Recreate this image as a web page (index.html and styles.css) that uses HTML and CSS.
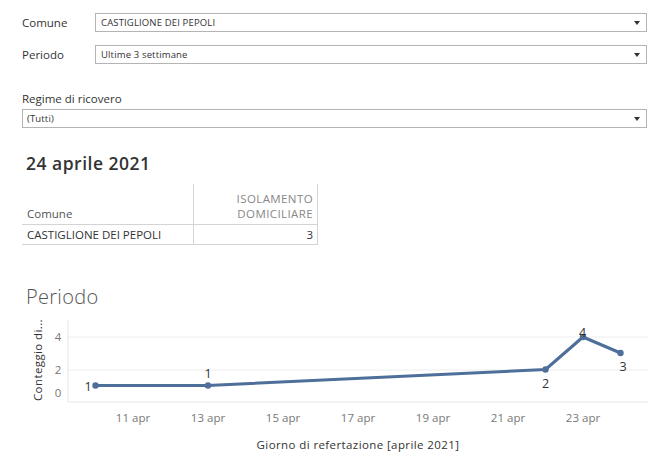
FILE: index.html
```html
<!DOCTYPE html>
<html lang="it">
<head>
    <meta charset="UTF-8">
    <title>Isolamento domiciliare - Comune</title>
    <link rel="stylesheet" href="styles.css">
</head>
<body>
    <div class="filters">
        <div class="filter-row">
            <span class="filter-label">Comune</span>
            <div class="select"><span>CASTIGLIONE DEI PEPOLI</span><i class="arrow"></i></div>
        </div>
        <div class="filter-row">
            <span class="filter-label">Periodo</span>
            <div class="select"><span>Ultime 3 settimane</span><i class="arrow"></i></div>
        </div>
        <div class="filter-block">
            <div class="block-label">Regime di ricovero</div>
            <div class="select wide"><span>(Tutti)</span><i class="arrow"></i></div>
        </div>
    </div>

    <h2 class="day-title">24 aprile 2021</h2>

    <table class="summary">
        <tr class="head">
            <th class="col-name">Comune</th>
            <th class="col-val">ISOLAMENTO<br>DOMICILIARE</th>
        </tr>
        <tr>
            <td class="col-name">CASTIGLIONE DEI PEPOLI</td>
            <td class="col-val">3</td>
        </tr>
    </table>

    <div class="chart">
        <div class="chart-title">Periodo</div>
        <svg class="chart-svg" width="657" height="141">
            <g transform="translate(0,-315)">
                <!-- grid -->
                <line x1="68" y1="320" x2="68" y2="402" class="axis"/>
                <line x1="68" y1="337" x2="648" y2="337" class="grid"/>
                <line x1="68" y1="370" x2="648" y2="370" class="grid"/>
                <line x1="68" y1="402" x2="648" y2="402" class="axis"/>

                <text class="ytitle" transform="translate(42,360) rotate(-90)" text-anchor="middle">Conteggio di...</text>
                <text class="tick" x="58" y="341" text-anchor="middle">4</text>
                <text class="tick" x="58" y="374" text-anchor="middle">2</text>
                <text class="tick" x="58" y="397" text-anchor="middle">0</text>

                <text class="tick" x="133" y="422" text-anchor="middle">11 apr</text>
                <text class="tick" x="208" y="422" text-anchor="middle">13 apr</text>
                <text class="tick" x="283" y="422" text-anchor="middle">15 apr</text>
                <text class="tick" x="358" y="422" text-anchor="middle">17 apr</text>
                <text class="tick" x="433" y="422" text-anchor="middle">19 apr</text>
                <text class="tick" x="508" y="422" text-anchor="middle">21 apr</text>
                <text class="tick" x="583" y="422" text-anchor="middle">23 apr</text>

                <text class="xtitle" x="358" y="449" text-anchor="middle">Giorno di refertazione [aprile 2021]</text>

                <polyline class="series" points="95.5,385.5 208,385.5 545.5,369.5 583,337 620.5,353"/>
                <circle cx="95.5" cy="385.5" r="3.2" class="dot"/>
                <circle cx="208" cy="385.5" r="3.2" class="dot"/>
                <circle cx="545.5" cy="369.5" r="3.2" class="dot"/>
                <circle cx="583" cy="337" r="3.2" class="dot"/>
                <circle cx="620.5" cy="353" r="3.2" class="dot"/>

                <text class="val" x="88" y="391" text-anchor="middle">1</text>
                <text class="val" x="208" y="378" text-anchor="middle">1</text>
                <text class="val" x="545.5" y="388" text-anchor="middle">2</text>
                <text class="val" x="582.5" y="337" text-anchor="middle">4</text>
                <text class="val" x="623" y="371" text-anchor="middle">3</text>
            </g>
        </svg>
    </div>
</body>
</html>
```

FILE: styles.css
```css
body {
    margin: 0;
    width: 657px;
    height: 456px;
    overflow: hidden;
    background: #fff;
    color: #333;
    font-family: "Open Sans", Lato, sans-serif;
}
.filters {
    padding: 13px 10px 0 22px;
}
.filter-row {
    display: flex;
    align-items: center;
    margin-bottom: 13px;
}
.filter-label {
    width: 73px;
    font-size: 11.5px;
}
.select {
    flex: 1;
    display: flex;
    align-items: center;
    justify-content: space-between;
    height: 19px;
    box-sizing: border-box;
    padding: 0 6px 0 5px;
    border: 1px solid #b4b4b4;
    font-size: 9.5px;
    letter-spacing: 0.15px;
    color: #333;
}
.select.wide {
    padding-left: 4px;
}
.arrow {
    width: 0;
    height: 0;
    border-left: 3px solid transparent;
    border-right: 3px solid transparent;
    border-top: 4px solid #333;
}
.filter-block {
    margin-top: 28px;
}
.block-label {
    font-size: 11.5px;
    line-height: 14px;
    margin-bottom: 3px;
}
.day-title {
    margin: 25px 0 0 26px;
    font-size: 17.5px;
    font-weight: 600;
    letter-spacing: 0.5px;
    color: #333;
    line-height: 20px;
}
.summary {
    margin: 11px 0 0 22px;
    border-collapse: collapse;
    font-size: 11.5px;
}
.summary th {
    font-weight: normal;
    vertical-align: bottom;
    height: 35px;
    padding: 2px 4px 3px 5px;
}
.summary td {
    height: 19px;
    padding: 0 4px 0 5px;
    border-top: 1px solid #d4d4d4;
    border-bottom: 1px solid #d4d4d4;
}
.summary .col-name {
    width: 162px;
    text-align: left;
    border-right: 1px solid #d4d4d4;
    color: #333;
}
.summary th.col-name {
    color: #555;
}
.summary .col-val {
    width: 114px;
    text-align: right;
    border-right: 1px solid #d4d4d4;
}
.summary th.col-val {
    color: #888;
    line-height: 15px;
    letter-spacing: 0.4px;
}
.chart {
    margin-top: 40px;
}
.chart-title {
    margin-left: 26px;
    font-size: 20px;
    font-weight: 300;
    letter-spacing: 0.3px;
    color: #555;
    line-height: 24px;
}
.chart-svg {
    display: block;
    margin-top: 6px;
}
.grid {
    stroke: #ececec;
    stroke-width: 1;
}
.axis {
    stroke: #e4e4e4;
    stroke-width: 1;
}
.series {
    fill: none;
    stroke: #4e6f9a;
    stroke-width: 3;
    stroke-linejoin: round;
}
.dot {
    fill: #4e6f9a;
}
.tick {
    font-size: 11.5px;
    fill: #777;
}
.ytitle,
.xtitle {
    font-size: 11.5px;
    letter-spacing: 0.4px;
    fill: #333;
}
.val {
    font-size: 12.5px;
    fill: #333;
}
```
